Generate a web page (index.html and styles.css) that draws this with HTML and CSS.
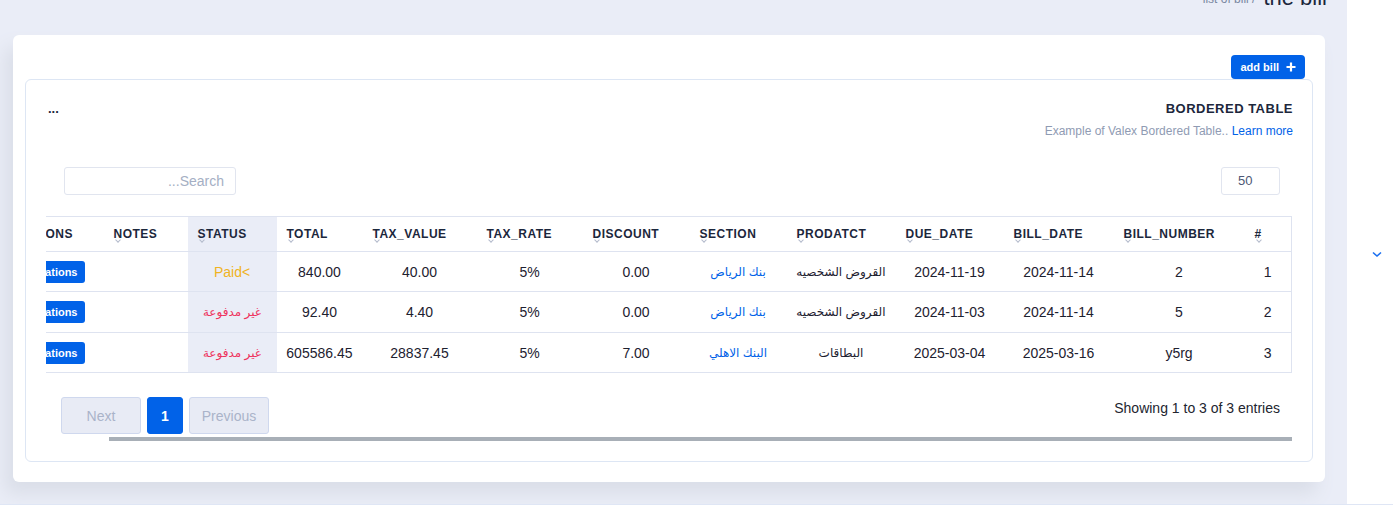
FILE: index.html
```html
<!DOCTYPE html>
<html lang="en">
<head>
<meta charset="utf-8">
<title>the bill</title>
<link rel="stylesheet" href="styles.css">
</head>
<body>
<div class="layout">
  <main class="main">
    <div class="page-header">
      <span class="crumb">list of bill /</span>
      <span class="crumb-current">the bill</span>
    </div>
    <section class="card">
      <div class="card-actions">
        <button class="btn-add">add bill
          <svg class="plus" width="10" height="10" viewBox="0 0 10 10"><path d="M5 0.5v9M0.5 5h9" stroke="#fff" stroke-width="2.2" fill="none"/></svg>
        </button>
      </div>
      <div class="inner">
        <div class="inner-head">
          <span class="dots">...</span>
          <div class="titles">
            <h4 class="title">BORDERED TABLE</h4>
            <p class="subtitle">Example of Valex Bordered Table.. <a class="link" href="#">Learn more</a></p>
          </div>
        </div>
        <div class="controls">
          <input class="search" type="text" placeholder="...Search">
          <div class="length">50</div>
        </div>
        <div class="table-scroll">
          <table class="bills">
            <colgroup>
              <col class="w-num"><col class="w-billnum"><col class="w-billdate"><col class="w-duedate"><col class="w-product"><col class="w-section"><col class="w-discount"><col class="w-taxrate"><col class="w-taxvalue"><col class="w-total"><col class="w-status"><col class="w-notes"><col class="w-ops">
            </colgroup>
            <thead>
              <tr>
                <th>#</th>
                <th>BILL_NUMBER</th>
                <th>BILL_DATE</th>
                <th>DUE_DATE</th>
                <th>PRODATCT</th>
                <th>SECTION</th>
                <th>DISCOUNT</th>
                <th>TAX_RATE</th>
                <th>TAX_VALUE</th>
                <th>TOTAL</th>
                <th class="col-status">STATUS</th>
                <th>NOTES</th>
                <th>OPERATIONS</th>
              </tr>
            </thead>
            <tbody>
              <tr>
                <td>1</td>
                <td>2</td>
                <td>2024-11-14</td>
                <td>2024-11-19</td>
                <td class="ar">القروض الشخصيه</td>
                <td class="ar sec">بنك الرياض</td>
                <td>0.00</td>
                <td>5%</td>
                <td>40.00</td>
                <td>840.00</td>
                <td class="col-status paid">Paid&lt;</td>
                <td></td>
                <td class="ops"><button class="btn-ops">Operations</button></td>
              </tr>
              <tr class="mid">
                <td>2</td>
                <td>5</td>
                <td>2024-11-14</td>
                <td>2024-11-03</td>
                <td class="ar">القروض الشخصيه</td>
                <td class="ar sec">بنك الرياض</td>
                <td>0.00</td>
                <td>5%</td>
                <td>4.40</td>
                <td>92.40</td>
                <td class="col-status unpaid">غير مدفوعة</td>
                <td></td>
                <td class="ops"><button class="btn-ops">Operations</button></td>
              </tr>
              <tr>
                <td>3</td>
                <td>y5rg</td>
                <td>2025-03-16</td>
                <td>2025-03-04</td>
                <td class="ar">البطاقات</td>
                <td class="ar sec">البنك الاهلي</td>
                <td>7.00</td>
                <td>5%</td>
                <td>28837.45</td>
                <td>605586.45</td>
                <td class="col-status unpaid">غير مدفوعة</td>
                <td></td>
                <td class="ops"><button class="btn-ops">Operations</button></td>
              </tr>
            </tbody>
          </table>
        </div>
        <div class="table-foot">
          <div class="pager">
            <button class="pg">Next</button>
            <button class="pg active">1</button>
            <button class="pg">Previous</button>
          </div>
          <div class="info">Showing 1 to 3 of 3 entries</div>
        </div>
        <div class="hscroll"><div class="thumb"></div></div>
      </div>
    </section>
  </main>
  <aside class="sidebar">
    <svg class="chev" width="10" height="7" viewBox="0 0 10 7"><polyline points="1,1.5 5,5 9,1.5" fill="none" stroke="#1a6ff0" stroke-width="1.6"/></svg>
  </aside>
</div>
<footer class="footer"></footer>
</body>
</html>
```

FILE: styles.css
```css
html, body {
  margin: 0;
  padding: 0;
}
body {
  font-family: "Liberation Sans", "DejaVu Sans", sans-serif;
  color: #1d212f;
  background: #ffffff;
  height: 507px;
  overflow: hidden;
}
.layout {
  display: flex;
  height: 504px;
}
.main {
  flex: 1;
  background: #eaedf7;
  padding: 0 22px 0 13px;
  overflow: hidden;
}
.sidebar {
  width: 46px;
  background: #ffffff;
  box-sizing: border-box;
  padding: 251px 0 0 25px;
}
.chev {
  display: block;
}
.footer {
  border-top: 1px solid #dfe6f5;
  background: #ffffff;
  height: 2px;
}

/* page header */
.page-header {
  margin-top: -16px;
  margin-right: -2px;
  height: 27px;
  display: flex;
  justify-content: flex-end;
  align-items: baseline;
  gap: 8px;
  margin-bottom: 24px;
}
.crumb {
  font-size: 12px;
  color: #7987a1;
  position: relative;
  top: -2px;
}
.crumb-current {
  font-size: 22px;
  line-height: 27px;
  color: #1c273c;
}

/* card */
.card {
  background: #ffffff;
  border-radius: 6px;
  box-shadow: -8px 12px 18px 0 #dadee8;
  padding: 20px 12px 20px 12px;
}
.card-actions {
  display: flex;
  justify-content: flex-end;
  padding-right: 8px;
}
.btn-add {
  height: 24px;
  background: #0162e8;
  color: #ffffff;
  border: none;
  border-radius: 4px;
  font-family: "Liberation Sans", sans-serif;
  font-weight: bold;
  font-size: 11px;
  padding: 0 9px 0 10px;
  display: inline-flex;
  align-items: center;
  gap: 7px;
}
.plus {
  display: block;
}

.inner {
  border: 1px solid #dde6f4;
  border-radius: 6px;
  padding: 20px 20px 20px 20px;
}
.inner-head {
  display: flex;
  justify-content: space-between;
  align-items: flex-start;
  padding-left: 2px;
  padding-top: 1px;
  margin-bottom: -1px;
}
.dots {
  font-size: 13px;
  font-weight: bold;
  line-height: 16px;
  color: #1c273c;
}
.titles {
  text-align: right;
  margin-right: -1px;
}
.title {
  margin: 0;
  font-size: 13px;
  line-height: 16px;
  font-weight: bold;
  letter-spacing: 0.5px;
  color: #1c273c;
}
.subtitle {
  margin: 6px 0 0;
  font-size: 12px;
  line-height: 16px;
  color: #8f9bb3;
}
.link {
  color: #0162e8;
  text-decoration: none;
}

.controls {
  margin-top: 29px;
  display: flex;
  justify-content: space-between;
  padding: 0 12px 0 18px;
}
.search {
  width: 172px;
  height: 28px;
  box-sizing: border-box;
  border: 1px solid #e1e5ef;
  border-radius: 3px;
  padding: 0 11px;
  text-align: right;
  font-family: "Liberation Sans", sans-serif;
  font-size: 14px;
  outline: none;
}
.search::placeholder {
  color: #a5afc4;
}
.length {
  width: 59px;
  height: 28px;
  box-sizing: border-box;
  border: 1px solid #e1e5ef;
  border-radius: 3px;
  padding-left: 16px;
  line-height: 26px;
  font-size: 13px;
  color: #4d5875;
}

/* table */
.table-scroll {
  margin-top: 21px;
  overflow: hidden;
  direction: rtl;
}
.bills {
  width: 1312px;
  table-layout: fixed;
  border-collapse: collapse;
  direction: rtl;
  border-top: 1px solid #dee3f0;
  border-right: 1px solid #dee3f0;
}
.w-num { width: 47px; }
.w-billnum { width: 131px; }
.w-billdate { width: 110px; }
.w-duedate { width: 108px; }
.w-product { width: 109px; }
.w-section { width: 97px; }
.w-discount { width: 107px; }
.w-taxrate { width: 106px; }
.w-taxvalue { width: 114px; }
.w-total { width: 86px; }
.w-status { width: 89px; }
.w-notes { width: 84px; }
.w-ops { width: 124px; }

.bills th {
  height: 34px;
  padding: 0 10px;
  font-size: 12px;
  font-weight: bold;
  letter-spacing: 0.5px;
  text-align: left;
  color: #1c273c;
  border-bottom: 1px solid #dee3f0;
  position: relative;
  white-space: nowrap;
}
.bills th::before {
  content: "";
  position: absolute;
  left: 12px;
  top: 21px;
  width: 3px;
  height: 3px;
  border-right: 1px solid #b4bbcc;
  border-bottom: 1px solid #b4bbcc;
  transform: rotate(45deg);
}
.bills td {
  height: 39px;
  padding: 0 10px;
  text-align: center;
  font-size: 14px;
  color: #1d212f;
  border-bottom: 1px solid #dee3f0;
  white-space: nowrap;
}
.bills tr.mid td {
  height: 40px;
}
.bills .col-status {
  background: #eaedf7;
}
.bills td.ar {
  font-size: 12px;
}
.bills td.sec {
  color: #0162e8;
}
.bills td.paid {
  color: #f0b323;
  direction: ltr;
}
.bills td.unpaid {
  color: #ee335e;
  font-size: 12px;
}
.bills td.ops {
  text-align: right;
  padding-right: 19px;
}
.btn-ops {
  height: 22px;
  background: #0162e8;
  color: #ffffff;
  border: none;
  border-radius: 3px;
  font-family: "Liberation Sans", sans-serif;
  font-weight: bold;
  font-size: 11px;
  padding: 0 7px;
}

/* footer of table */
.table-foot {
  margin-top: 24px;
  display: flex;
  justify-content: space-between;
  align-items: flex-start;
  padding: 0 12px 0 15px;
}
.pager {
  display: flex;
  gap: 6px;
}
.pg {
  height: 37px;
  width: 80px;
  box-sizing: border-box;
  border: 1px solid #cfd8ee;
  background: #e8ebf5;
  color: #aab3c9;
  border-radius: 3px;
  font-family: "Liberation Sans", sans-serif;
  font-size: 14px;
  padding: 0;
}
.pg.active {
  width: 36px;
  background: #0162e8;
  border-color: #0162e8;
  color: #ffffff;
  font-weight: bold;
}
.info {
  margin-top: 3px;
  font-size: 14px;
  line-height: 16px;
  color: #22252f;
}
.hscroll {
  margin-top: 3px;
  height: 4px;
  padding-left: 63px;
}
.thumb {
  height: 4px;
  background: #a8afb7;
}
```
